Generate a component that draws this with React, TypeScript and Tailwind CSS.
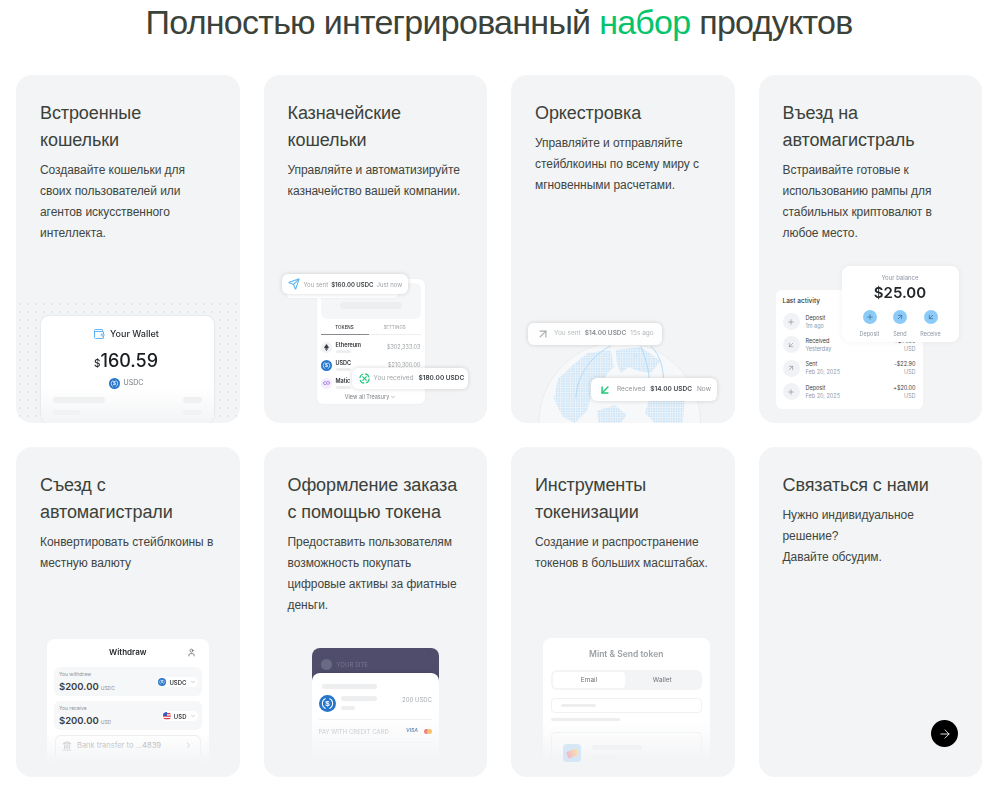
import type { ReactNode } from "react";
import { ArrowDownLeft, ArrowRight, ArrowUpRight, ChevronDown, ChevronRight, Landmark, Plus, Send, User, Wallet } from "lucide-react";

function Bar({ className }: { className: string }) {
  return <div className={`rounded-full bg-[#eceef0] ${className}`} />;
}

function UsdcIcon({ className }: { className: string }) {
  return (
    <svg viewBox="0 0 32 32" className={className} aria-hidden="true">
      <circle cx="16" cy="16" r="16" fill="#2775ca" />
      <path d="M12.5 6.8a10 10 0 0 0 0 18.4M19.5 6.8a10 10 0 0 1 0 18.4" fill="none" stroke="#fff" strokeWidth="2" />
      <text x="16" y="21.5" textAnchor="middle" fontSize="15" fontWeight="700" fill="#fff" fontFamily="Liberation Sans">$</text>
    </svg>
  );
}

function Card({ title, text, children }: { title: ReactNode; text: ReactNode; children?: ReactNode }) {
  return (
    <div className="relative flex flex-col overflow-hidden rounded-2xl bg-[#f3f4f6]">
      <div className="px-6 pt-[25px]">
        <h3 className="text-[18px] leading-[27px] tracking-[-0.1px] text-[#3b423a]">{title}</h3>
        <p className="mt-[6px] text-[12px] leading-[21px] tracking-[-0.05px] text-[#3f4540]">{text}</p>
      </div>
      <div className="mt-auto">{children}</div>
    </div>
  );
}

function Fade({ className }: { className: string }) {
  return <div className={`absolute inset-x-0 bg-gradient-to-b from-[#f3f4f6]/0 to-[#f3f4f6] ${className}`} />;
}

function WalletArt() {
  return (
    <div className="relative h-[123px] bg-[radial-gradient(#e2e7ec_0.7px,transparent_0.9px)] bg-[size:8px_8px] pt-4 pl-[25px] [font-family:Inter,sans-serif]">
      <div className="relative h-[107px] w-[173px] overflow-hidden rounded-lg bg-white shadow-[0_0_2px_rgba(0,0,0,0.15)] blur-[0.3px]">
        <div className="flex items-center justify-center gap-[5px] pt-[11px] pr-[3px]">
          <Wallet className="h-3 w-3 text-[#60b4f5]" />
          <span className="text-[9px] font-medium leading-[14px] text-[#2b2f33]">Your Wallet</span>
        </div>
        <div className="mt-[9px] flex items-baseline justify-center pr-[3px] leading-[22px] text-[#1b1e21]">
          <span className="text-[10px] font-medium">$</span>
          <span className="text-[18px] font-medium">160.59</span>
        </div>
        <div className="mt-[4px] flex items-center justify-center gap-1 pr-[3px]">
          <UsdcIcon className="h-[11px] w-[11px]" />
          <span className="text-[7px] text-[#74797e]">USDC</span>
        </div>
        <div className="mt-[8px] flex justify-between px-3">
          <Bar className="h-[6px] w-[52px]" />
          <Bar className="h-[6px] w-[19px]" />
        </div>
        <div className="mt-[7px] flex justify-between px-3">
          <Bar className="h-[5px] w-[27px]" />
          <Bar className="h-[5px] w-[19px]" />
        </div>
        <Fade className="bottom-0 h-[36px]" />
      </div>
    </div>
  );
}

function Pill({ className, children }: { className: string; children: ReactNode }) {
  return (
    <div className={`absolute flex items-center whitespace-nowrap rounded-md bg-white shadow-[0_0_4px_rgba(0,0,0,0.16)] ${className}`}>
      {children}
    </div>
  );
}

function TreasuryRow({ icon, name, value }: { icon: ReactNode; name: string; value: string }) {
  return (
    <div className="flex h-[18px] items-center">
      <div className="flex w-[11px] justify-center">{icon}</div>
      <div className="ml-[4px]">
        <div className="text-[5.5px] font-semibold leading-[7px] text-[#2d3034]">{name}</div>
        <div className="mt-[1px] h-[3px] w-[15px] rounded-full bg-[#eceef0]" />
      </div>
      <span className="ml-auto text-[5.5px] text-[#a0a4a8]">{value}</span>
    </div>
  );
}

function TreasuryArt() {
  return (
    <div className="relative h-[153px] pt-[9px] pl-[53px] [font-family:Inter,sans-serif] blur-[0.3px]">
      <div className="h-[125px] w-[108px] rounded-md bg-white px-1 pt-1 shadow-[0_0_2px_rgba(0,0,0,0.06)]">
        <div className="flex h-[36px] items-end justify-center rounded-md bg-[#f5f6f7] pb-[10px]">
          <Bar className="h-[7px] w-[62px]" />
        </div>
        <div className="mt-[5px] flex text-center text-[4.5px] leading-[8px]">
          <span className="w-[48px] font-medium text-[#2d3034]">TOKENS</span>
          <span className="flex-1 text-[#a0a4a8]">SETTINGS</span>
        </div>
        <div className="mt-[2px] flex h-[1px]">
          <div className="w-[48px] bg-[#888c90]" />
          <div className="flex-1 bg-[#eceef0]" />
        </div>
        <div className="mt-[3px]">
          <TreasuryRow
            name="Ethereum"
            value="$302,333.03"
            icon={
              <div className="flex h-[11px] w-[11px] items-center justify-center rounded-full bg-[#f1f2f4]">
                <svg viewBox="0 0 10 14" className="h-[7px] w-[5px]"><path d="M5 0 10 7 5 10 0 7ZM5 11l4-2.600L5 14 1 8.400Z" fill="#3a3d42" /></svg>
              </div>
            }
          />
          <TreasuryRow name="USDC" value="$210,300.00" icon={<UsdcIcon className="h-[11px] w-[11px]" />} />
          <TreasuryRow
            name="Matic"
            value=""
            icon={
              <div className="flex h-[11px] w-[11px] items-center justify-center rounded-full bg-[#f3ecfd]">
                <svg viewBox="0 0 12 10" className="h-[6px] w-[7px]" fill="none" stroke="#9b62e8" strokeWidth="1.300"><path d="M5 3.500 3.500 2.500 1 4v2.500L3.500 8 6 6.500v-3L8.500 2 11 3.500V6L8.500 7.500 7 6.500" /></svg>
              </div>
            }
          />
        </div>
        <div className="mt-[1px] flex items-center justify-center gap-[1px] text-[5.5px] leading-[8px] text-[#7b8085]">
          View all Treasury <ChevronDown className="h-[6px] w-[6px]" />
        </div>
      </div>
      <div className="absolute top-[22px] left-[23px] h-[6px] w-[111px] rounded-b bg-white shadow-[0_0_2px_rgba(0,0,0,0.08)]" />
      <Pill className="top-[4px] left-[18px] h-[20px] w-[126px] gap-[3px] pl-[6px] text-[6px]">
        <Send className="mr-[1px] h-[12px] w-[12px] text-[#5db4f3]" strokeWidth={2.200} />
        <span className="text-[#a0a4a8]">You sent</span>
        <span className="font-semibold text-[#3a3e42]">$160.00 USDC</span>
        <span className="text-[#a0a4a8]">Just now</span>
      </Pill>
      <Pill className="top-[98px] left-[88px] h-[21px] w-[116px] gap-[4px] pl-[7px] text-[6.500px]">
        <svg viewBox="0 0 16 16" className="h-[11px] w-[11px]" fill="none" stroke="#22c77a" strokeWidth="1.600" aria-hidden="true">
          <circle cx="8" cy="8" r="6.800" strokeDasharray="8 2.700" />
          <path d="M5 5l6 6M11 5l-6 6" />
        </svg>
        <span className="text-[#a0a4a8]">You received</span>
        <span className="ml-[1px] font-semibold text-[#3a3e42]">$180.00 USDC</span>
      </Pill>
    </div>
  );
}

function GlobeArt() {
  return (
    <div className="relative h-[100px] [font-family:Inter,sans-serif] blur-[0.3px]">
      <svg viewBox="0 0 224 100" className="h-[100px] w-full" aria-hidden="true">
        <defs>
          <pattern id="grid" width="2.500" height="2.500" patternUnits="userSpaceOnUse">
            <path d="M0 0h2v2H0Z" fill="#cfe6f8" />
          </pattern>
        </defs>
        <circle cx="109" cy="100" r="81" fill="#f7f8f9" stroke="#e9ecee" />
        <g fill="url(#grid)">
          <path d="M47 56 62 42 77 30 100 27 103 44 97 50 92 58 82 62 80 75 76 88 64 100 52 94 43 76Z" />
          <path d="M105 27 130 24 150 38 140 50 128 48 118 44 110 50 106 40Z" />
          <path d="M138 78 160 74 174 78 172 100 144 100 134 90Z" />
          <path d="M86 88 104 82 116 92 110 100 88 100Z" />
          <path d="M124 30 128 33 126 36 122 34Z" />
        </g>
        <g fill="none" stroke="#a8d4f5" strokeWidth="0.800">
          <path d="M65 75C66 50 84 30 100 23" />
          <path d="M130 23C136 36 140 55 139 72" />
          <path d="M140 23C150 32 153 46 153 60" />
        </g>
      </svg>
      <Pill className="top-0 left-[17px] h-[22px] w-[134px] gap-[4px] bg-white/85 pl-[8px] text-[6.500px]">
        <ArrowUpRight className="h-[14px] w-[14px] text-[#a8acb0]" strokeWidth={2} />
        <span className="text-[#b4b8bb]">You sent</span>
        <span className="font-semibold text-[#888c90]">$14.00 USDC</span>
        <span className="text-[#b4b8bb]">15s ago</span>
      </Pill>
      <Pill className="top-[55px] left-[80px] h-[23px] w-[126px] gap-[5px] pl-[7px] text-[6.500px]">
        <ArrowDownLeft className="h-[14px] w-[14px] text-[#22c77a]" strokeWidth={2.500} />
        <span className="text-[#8e9296]">Received</span>
        <span className="font-semibold text-[#3f4347]">$14.00 USDC</span>
        <span className="text-[#8e9296]">Now</span>
      </Pill>
    </div>
  );
}

function ActivityRow({ icon, name, sub, amount }: { icon: ReactNode; name: string; sub: string; amount: string }) {
  return (
    <div className="flex h-[23.300px] items-center">
      <div className="flex h-[17px] w-[17px] items-center justify-center rounded-full bg-[#f1f2f5] text-[#8b8f99]">{icon}</div>
      <div className="ml-[6px] text-[5.500px] leading-[8px]">
        <div className="text-[#3a3e42]">{name}</div>
        <div className="text-[#8d9aad]">{sub}</div>
      </div>
      <div className="ml-auto text-right text-[5.500px] leading-[8px]">
        <div className="text-[#3a3e42]">{amount}</div>
        <div className="text-[#8d9aad]">USD</div>
      </div>
    </div>
  );
}

function RoundAction({ label, icon }: { label: string; icon: ReactNode }) {
  return (
    <div className="flex w-[30.500px] flex-col items-center gap-[7px]">
      <div className="flex h-[14px] w-[14px] items-center justify-center rounded-full bg-[#8ccbf8] text-[#33658c]">{icon}</div>
      <span className="text-[5.500px] leading-[7px] text-[#8d96a3]">{label}</span>
    </div>
  );
}

function RampArt() {
  return (
    <div className="relative h-[157px] pt-6 pl-[17px] [font-family:Inter,sans-serif] blur-[0.3px]">
      <div className="h-[119px] w-[147px] rounded-md bg-white px-[7px] pt-[6px]">
        <div className="mb-[4px] text-[6.500px] font-medium leading-[10px] text-[#33373b]">Last activity</div>
        <ActivityRow icon={<Plus className="h-2 w-2" />} name="Deposit" sub="1m ago" amount="+$5.00" />
        <ActivityRow icon={<ArrowDownLeft className="h-2 w-2" />} name="Received" sub="Yesterday" amount="+$14.00" />
        <ActivityRow icon={<ArrowUpRight className="h-2 w-2" />} name="Sent" sub="Feb 20, 2025" amount="-$22.90" />
        <ActivityRow icon={<Plus className="h-2 w-2" />} name="Deposit" sub="Feb 20, 2025" amount="+$20.00" />
      </div>
      <div className="absolute top-0 left-[83px] h-[76px] w-[117px] rounded-lg bg-white pt-2 text-center shadow-[0_0_6px_rgba(0,0,0,0.06)]">
        <div className="text-[6px] leading-[7px] text-[#8d96a3]">Your balance</div>
        <div className="mt-[2px] text-[15px] font-semibold leading-[20px] text-[#22272b]">$25.00</div>
        <div className="mt-[7px] flex justify-center">
          <RoundAction label="Deposit" icon={<Plus className="h-2 w-2" />} />
          <RoundAction label="Send" icon={<ArrowUpRight className="h-2 w-2" />} />
          <RoundAction label="Receive" icon={<ArrowDownLeft className="h-2 w-2" />} />
        </div>
      </div>
    </div>
  );
}

function UsFlag() {
  return (
    <svg viewBox="0 0 16 16" className="h-2 w-2" aria-hidden="true">
      <clipPath id="flag"><circle cx="8" cy="8" r="8" /></clipPath>
      <g clipPath="url(#flag)">
        <path d="M0 0h16v16H0Z" fill="#f3f4f6" />
        <path d="M0 2h16v2.400H0ZM0 7h16v2.400H0ZM0 12h16v2.400H0Z" fill="#e0424d" />
        <path d="M0 0h8v8H0Z" fill="#3b5bb5" />
      </g>
    </svg>
  );
}

function AmountBox({ label, unit, chip }: { label: string; unit: string; chip: ReactNode }) {
  return (
    <div className="relative h-[29px] rounded-md bg-[#f6f7f8] pt-[4px] pl-[5px]">
      <div className="text-[5px] leading-[6px] text-[#8e9296]">{label}</div>
      <div className="mt-[3px] flex items-baseline gap-[2px]">
        <span className="text-[9.500px] font-semibold leading-[13px] text-[#3a3e42]">$200.00</span>
        <span className="text-[5px] text-[#8e9296]">{unit}</span>
      </div>
      <div className="absolute top-[10px] right-[4px] flex h-[10px] items-center gap-[3px] rounded-full bg-white pr-[2px] pl-[1px] text-[6px] font-semibold text-[#3a3e42]">
        {chip}
        <ChevronDown className="h-[6px] w-[6px] text-[#9a9ea2]" />
      </div>
    </div>
  );
}

function WithdrawArt() {
  return (
    <div className="px-[31px] pb-0 [font-family:Inter,sans-serif] blur-[0.3px]">
      <div className="relative h-[138px] overflow-hidden rounded-t-lg bg-white px-[7px]">
        <div className="relative flex h-[28px] items-center justify-center pb-[2px] text-[8px] font-semibold text-[#1f2327]">
          Withdraw
          <User className="absolute right-[6px] top-[9px] h-[9px] w-[9px] text-[#5c6066]" />
        </div>
        <div className="flex flex-col gap-[5px]">
          <AmountBox label="You withdraw" unit="USDC" chip={<><UsdcIcon className="h-2 w-2" /> USDC</>} />
          <AmountBox label="You receive" unit="USD" chip={<><UsFlag /> USD</>} />
        </div>
        <div className="mx-[1px] mt-[5px] flex h-[26px] items-center gap-[5px] rounded-md border border-[#eceef0] pb-[5px] pl-[6px] pr-[7px] text-[7.500px] text-[#a6aaae]">
          <Landmark className="h-[10px] w-[10px]" />
          <span>Bank transfer to ...<b className="font-medium">4839</b></span>
          <ChevronRight className="ml-auto h-[9px] w-[9px]" />
        </div>
        <Fade className="bottom-0 h-[44px] via-[#f3f4f6] via-70%" />
      </div>
    </div>
  );
}

function CheckoutArt() {
  return (
    <div className="px-[48px] pb-[17px] [font-family:Inter,sans-serif] blur-[0.3px]">
      <div className="relative h-[112px] overflow-hidden rounded-t-lg bg-[#4f4d6b]">
        <div className="flex h-[25px] items-center gap-[5px] pt-[7px] pl-[9px] text-[6px] text-[#77768d]">
          <span className="h-[11px] w-[11px] rounded-full bg-[#6b6a84]" />
          YOUR SITE
        </div>
        <div className="relative h-[87px] rounded-t-lg bg-white px-[7px] pt-[11px] shadow-[0_-1px_3px_rgba(0,0,0,0.12)]">
          <Bar className="ml-[3px] h-[5px] w-[55px]" />
          <div className="mt-[3px] flex h-[28px] items-center border-b border-[#f0f1f3] pb-[5px]">
            <UsdcIcon className="h-[17px] w-[17px]" />
            <div className="ml-[5px] flex flex-col gap-[5px]">
              <Bar className="h-[5px] w-[36px]" />
              <Bar className="h-[4px] w-[14px]" />
            </div>
            <span className="mb-[8px] ml-auto text-[6px] text-[#a6aaae]">200 USDC</span>
          </div>
          <div className="flex h-[23px] items-center border-b border-[#f0f1f3] text-[6px] text-[#b4b8bd]">
            PAY WITH CREDIT CARD
            <span className="ml-auto text-[5px] font-bold italic text-[#3f6fa8]">VISA</span>
            <span className="ml-[6px] flex">
              <span className="h-[5px] w-[5px] rounded-full bg-[#e8443a]" />
              <span className="-ml-[2px] h-[5px] w-[5px] rounded-full bg-[#f7a823]" />
            </span>
          </div>
          <Fade className="bottom-0 h-[44px]" />
        </div>
      </div>
    </div>
  );
}

function TokenArt() {
  return (
    <div className="pr-[25px] pb-[15px] pl-[32px] [font-family:Inter,sans-serif] blur-[0.3px]">
      <div className="relative h-[124px] overflow-hidden rounded-t-lg bg-white px-2">
        <div className="pt-[10px] text-center text-[8.500px] font-semibold leading-[12px] text-[#9aa0a6]">Mint &amp; Send token</div>
        <div className="mt-[10px] flex h-[20px] rounded-md bg-[#f3f4f6] p-[2px] text-center text-[6.500px] leading-[16px] text-[#6d7278]">
          <div className="w-[72px] rounded bg-white">Email</div>
          <div className="flex-1">Wallet</div>
        </div>
        <div className="mt-[8px] flex h-[15px] items-center rounded border border-[#f0f1f3] pl-[9px]">
          <Bar className="h-[3px] w-[35px]" />
        </div>
        <Bar className="mt-[5px] h-[3px] w-[69px]" />
        <div className="mt-[11px] flex h-[40px] gap-[11px] rounded border border-[#f0f1f3] pt-[11px] pl-[11px]">
          <div className="relative z-10 flex h-[18px] w-[18px] items-center justify-center rounded bg-[#cfe3f6] opacity-80">
            <div className="h-[7px] w-[11px] -rotate-[20deg] rounded-[1px] bg-gradient-to-r from-[#f4a8c0] to-[#f8dc9a]" />
          </div>
          <div className="flex flex-col gap-[5px] pt-[1px]">
            <Bar className="h-[5px] w-[50px]" />
            <Bar className="h-[4px] w-[24px]" />
          </div>
        </div>
        <Fade className="bottom-0 h-[40px]" />
      </div>
    </div>
  );
}

export default function App() {
  return (
    <main className="min-h-[787px] bg-white px-4 [font-family:'Liberation_Sans',Arial,sans-serif]">
      <h2 className="h-[75px] w-[966px] pt-[1px] text-center text-[34px] leading-[43px] tracking-[-0.72px] text-[#3b423a]">
        Полностью интегрированный <span className="text-[#05c46b]">набор</span> продуктов
      </h2>
      <div className="grid w-[966px] grid-cols-4 grid-rows-[348px_330px] gap-6">
        <Card
          title={<>Встроенные<br />кошельки</>}
          text={<>Создавайте кошельки для<br />своих пользователей или<br />агентов искусственного<br />интеллекта.</>}
        >
          <WalletArt />
        </Card>
        <Card
          title={<>Казначейские<br />кошельки</>}
          text={<>Управляйте и автоматизируйте<br />казначейство вашей компании.</>}
        >
          <TreasuryArt />
        </Card>
        <Card
          title="Оркестровка"
          text={<>Управляйте и отправляйте<br />стейблкоины по всему миру с<br />мгновенными расчетами.</>}
        >
          <GlobeArt />
        </Card>
        <Card
          title={<>Въезд на<br />автомагистраль</>}
          text={<>Встраивайте готовые к<br />использованию рампы для<br />стабильных криптовалют в<br />любое место.</>}
        >
          <RampArt />
        </Card>
        <Card
          title={<>Съезд с<br />автомагистрали</>}
          text={<>Конвертировать стейблкоины в<br />местную валюту</>}
        >
          <WithdrawArt />
        </Card>
        <Card
          title={<>Оформление заказа<br />с помощью токена</>}
          text={<>Предоставить пользователям<br />возможность покупать<br />цифровые активы за фиатные<br />деньги.</>}
        >
          <CheckoutArt />
        </Card>
        <Card
          title={<>Инструменты<br />токенизации</>}
          text={<>Создание и распространение<br />токенов в больших масштабах.</>}
        >
          <TokenArt />
        </Card>
        <Card
          title="Связаться с нами"
          text={<>Нужно индивидуальное<br />решение?<br />Давайте обсудим.</>}
        >
          <div className="flex justify-end pr-6 pb-[30px]">
            <div className="flex h-[27px] w-[27px] items-center justify-center rounded-full bg-black text-white">
              <ArrowRight className="h-[14px] w-[14px]" strokeWidth={1.500} />
            </div>
          </div>
        </Card>
      </div>
    </main>
  );
}
